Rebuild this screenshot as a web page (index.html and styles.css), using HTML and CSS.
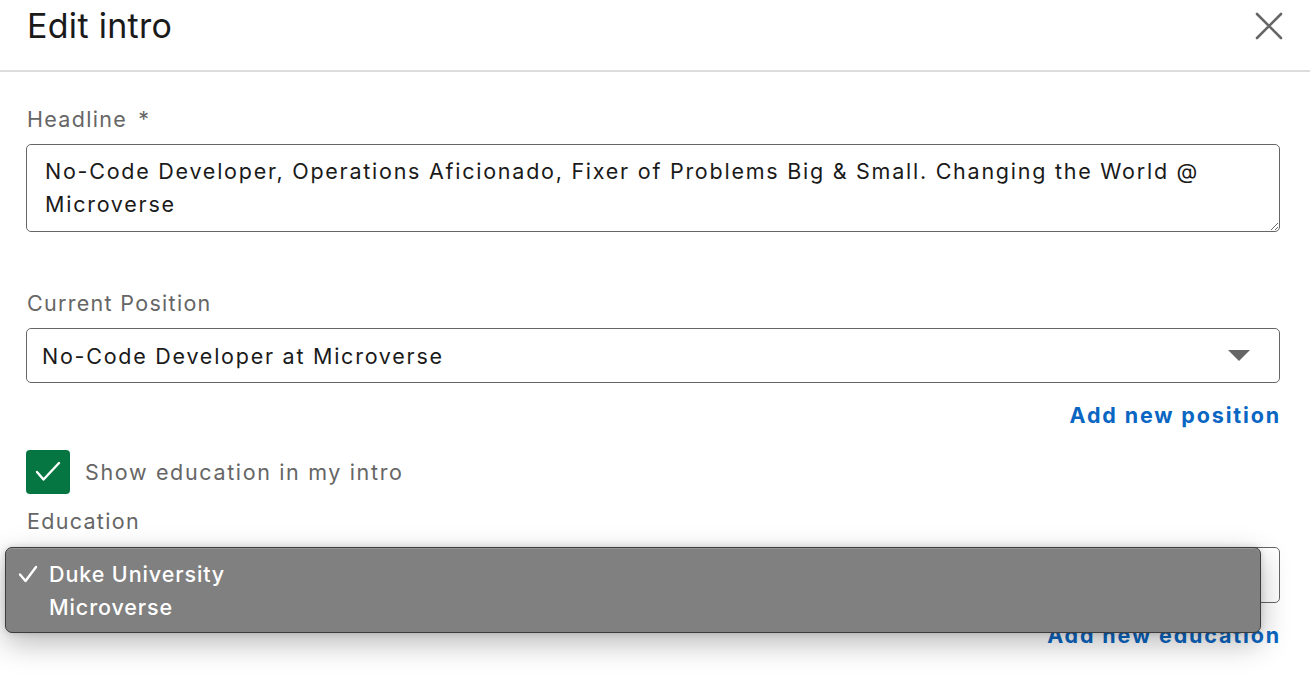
FILE: index.html
```html
<!DOCTYPE html>
<html lang="en">
<head>
<meta charset="utf-8">
<title>Edit intro</title>
<link rel="stylesheet" href="styles.css">
</head>
<body>
<div class="modal">
  <header class="modal-header">
    <h2 class="modal-title">Edit intro</h2>
    <button class="close-btn" aria-label="Dismiss">
      <svg width="28" height="28" viewBox="0 0 28 28"><path d="M2 2 L26 26 M26 2 L2 26" stroke="#666" stroke-width="2.6" stroke-linecap="round" fill="none"/></svg>
    </button>
  </header>
  <div class="modal-body">
    <div class="field field-first">
      <label class="field-label">Headline <span class="req">*</span></label>
      <textarea class="textarea" readonly>No-Code Developer, Operations Aficionado, Fixer of Problems Big &amp; Small. Changing the World @ Microverse</textarea>
    </div>
    <div class="field field-spaced">
      <label class="field-label">Current Position</label>
      <div class="select">
        <span class="select-value">No-Code Developer at Microverse</span>
        <svg class="caret" width="22" height="11" viewBox="0 0 22 11"><path d="M0 0 H22 L11 11 Z" fill="#666"/></svg>
      </div>
      <div class="link-row"><a class="add-link">Add new position</a></div>
    </div>
    <div class="checkbox-row">
      <span class="checkbox">
        <svg width="44" height="44" viewBox="0 0 44 44"><path d="M11 22 L17.5 29.5 L33 13" stroke="#fff" stroke-width="2.4" fill="none" stroke-linecap="round" stroke-linejoin="round"/></svg>
      </span>
      <span class="checkbox-label">Show education in my intro</span>
    </div>
    <div class="field field-edu">
      <label class="field-label">Education</label>
      <div class="select select-edu">
        <span class="select-value">Duke University</span>
      </div>
      <div class="link-row"><a class="add-link">Add new education</a></div>
    </div>
  </div>
  <div class="dropdown">
    <div class="option selected">
      <svg class="opt-check" width="20" height="20" viewBox="0 0 20 20"><path d="M2 10.5 L7.5 17 L18 3" stroke="#fff" stroke-width="2.4" fill="none" stroke-linecap="round" stroke-linejoin="round"/></svg>
      <span>Duke University</span>
    </div>
    <div class="option"><span>Microverse</span></div>
  </div>
</div>
</body>
</html>
```

FILE: styles.css
```css
* { box-sizing: border-box; }
html, body {
  margin: 0;
  padding: 0;
  background: #fff;
}
body {
  font-family: Inter, "Noto Sans", "Liberation Sans", sans-serif;
  color: #1a1a1a;
  width: 1310px;
  height: 694px;
  overflow: hidden;
}
.modal {
  position: relative;
  width: 1310px;
  height: 694px;
}
.modal-header {
  height: 72px;
  border-bottom: 2px solid #dcdcdc;
  display: flex;
  align-items: flex-start;
  justify-content: space-between;
  padding: 0 27px 0 27px;
}
.modal-title {
  margin: 0;
  font-size: 34px;
  font-weight: 400;
  line-height: 51px;
  color: #1a1a1a;
  letter-spacing: 0.3px;
}
.close-btn {
  border: 0;
  background: none;
  padding: 0;
  margin-top: 12px;
  width: 28px;
  height: 28px;
  display: flex;
}
.modal-body {
  padding: 0 30px 0 26px;
  font-size: 21.5px;
  letter-spacing: 1.75px;
}
.field { display: flex; flex-direction: column; }
.field-first { padding-top: 34px; }
.field-spaced { margin-top: 58px; }
.field-label {
  font-size: 21.5px;
  line-height: 26px;
  color: #666;
  padding-left: 1px;
  margin-bottom: 12px;
  letter-spacing: 1.3px;
}
.req { margin-left: 4px; }
.textarea {
  display: block;
  width: 100%;
  height: 88px;
  border: 1.5px solid #666;
  border-radius: 5px;
  padding: 10px 14px 0 18px;
  font-family: Inter, "Noto Sans", "Liberation Sans", sans-serif;
  font-size: 21.5px;
  letter-spacing: 1.75px;
  line-height: 33px;
  color: #1a1a1a;
  resize: vertical;
  outline: none;
  overflow: hidden;
}
.select {
  height: 55px;
  border: 1.5px solid #666;
  border-radius: 5px;
  display: flex;
  align-items: center;
  justify-content: space-between;
  padding: 0 29px 0 15px;
  color: #1a1a1a;
}
.select-edu { height: 56px; }
.link-row {
  display: flex;
  justify-content: flex-end;
  margin-top: 18px;
}
.add-link {
  line-height: 28px;
  font-weight: 700;
  color: #0a66c2;
  cursor: pointer;
  margin-right: -1px;
  letter-spacing: 1.85px;
}
.checkbox-row {
  display: flex;
  align-items: center;
  gap: 15px;
  margin-top: 21px;
}
.checkbox {
  width: 44px;
  height: 44px;
  background: #057642;
  border-radius: 4px;
  display: flex;
}
.checkbox-label {
  color: #666;
  letter-spacing: 1.65px;
}
.field-edu { margin-top: 14px; }
.field-edu .field-label { margin-bottom: 13px; }
.dropdown {
  position: absolute;
  left: 5px;
  top: 547px;
  width: 1256px;
  height: 86px;
  background: #808080;
  border: 1px solid #3c3c3c;
  border-radius: 7px;
  box-shadow: inset 0 1px 0 rgba(255,255,255,0.2), 0 10px 30px rgba(0,0,0,0.28), 0 0 6px rgba(0,0,0,0.15);
  padding-top: 9px;
}
.option {
  height: 33px;
  display: flex;
  align-items: center;
  padding-left: 43px;
  position: relative;
  color: #fff;
  font-size: 21.5px;
  font-weight: 500;
  letter-spacing: 0.9px;
}
.opt-check {
  position: absolute;
  left: 12px;
  top: 7px;
}
```
